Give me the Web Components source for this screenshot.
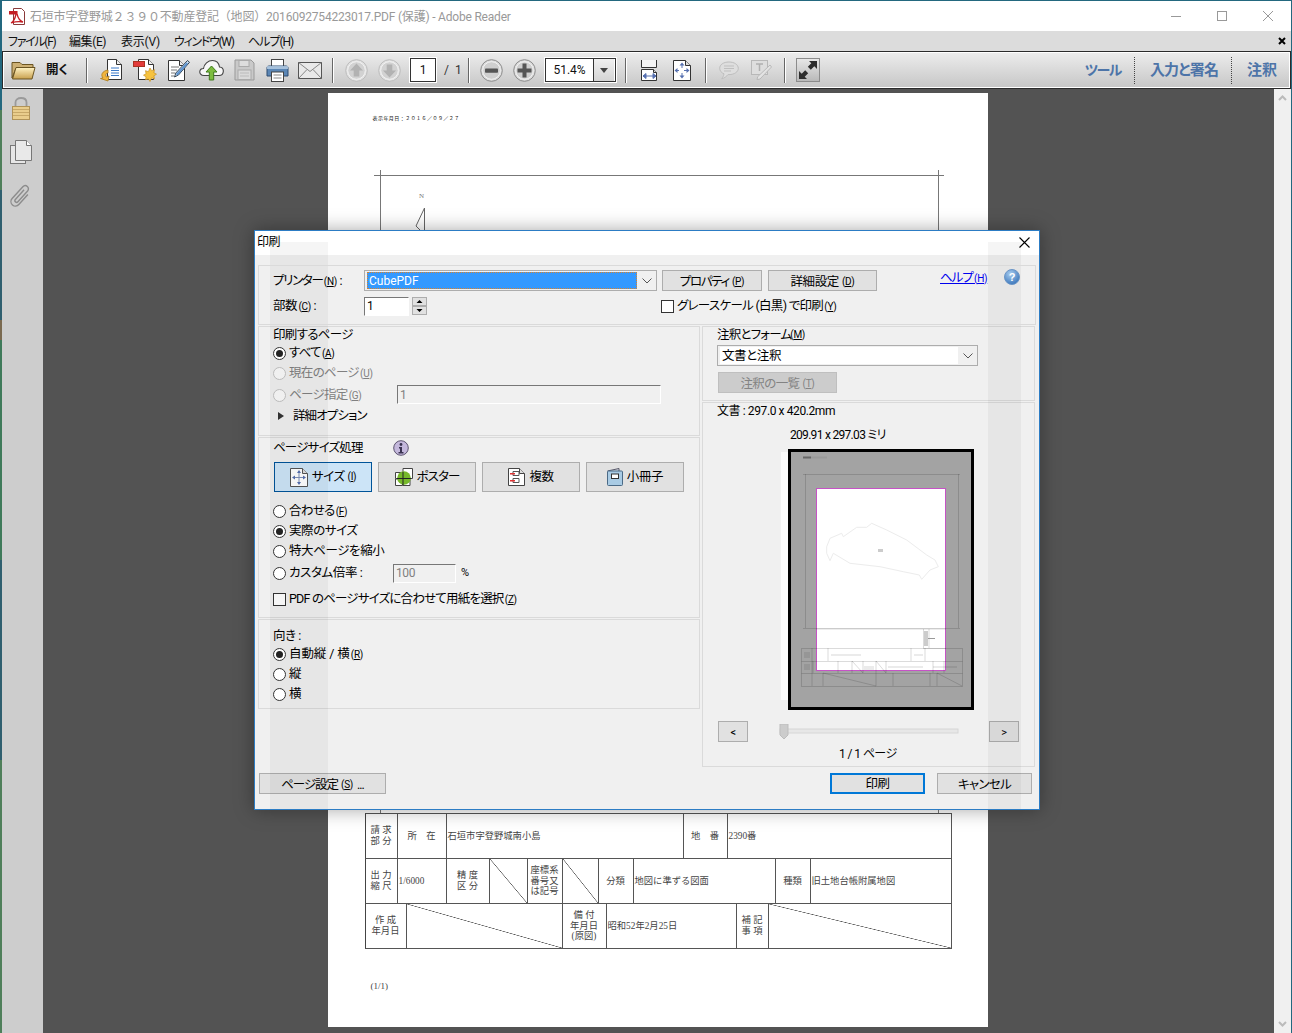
<!DOCTYPE html>
<html lang="ja">
<head>
<meta charset="utf-8">
<title>Adobe Reader</title>
<style>
html, body { margin: 0; height: 100%; overflow: hidden; }
body {
  font-family: Roboto, "Noto Sans CJK JP", sans-serif;
  font-feature-settings: "palt";
  background: linear-gradient(#23687f 0 110px, #4f7f5a 110px 190px, #2f5f6f 190px 320px, #7a6a50 320px 340px, #3f7a5a 340px 560px, #2f5f6f 560px 760px, #4f7f5a 760px) 0 0 / 2px 100% no-repeat, #23687f;
}
pdf-workspace { height: 944px; }
</style>
</head>
<body>
<pdf-window>
  <pdf-titlebar>石垣市字登野城２３９０不動産登記（地図）2016092754223017.PDF (保護) - Adobe Reader</pdf-titlebar>
  <pdf-menubar></pdf-menubar>
  <pdf-toolbar></pdf-toolbar>
  <pdf-workspace>
    <pdf-rail></pdf-rail>
    <pdf-doc>
      <pdf-page>
        <map-row style="height:46px">
          <map-cell style="width:32px" center>請 求<br>部 分</map-cell>
          <map-cell style="width:49px" center>所　在</map-cell>
          <map-cell style="width:237px">石垣市字登野城南小島</map-cell>
          <map-cell style="width:44px" center>地　番</map-cell>
          <map-cell style="width:224px" last>2390番</map-cell>
        </map-row>
        <map-row style="height:45px">
          <map-cell style="width:32px" center>出 力<br>縮 尺</map-cell>
          <map-cell style="width:49px">1/6000</map-cell>
          <map-cell style="width:43px" center>精 度<br>区 分</map-cell>
          <map-cell style="width:38px" diag></map-cell>
          <map-cell style="width:35px" center>座標系<br>番号又<br>は記号</map-cell>
          <map-cell style="width:36px" diag></map-cell>
          <map-cell style="width:35px" center>分類</map-cell>
          <map-cell style="width:142px">地図に準ずる図面</map-cell>
          <map-cell style="width:35px" center>種類</map-cell>
          <map-cell style="width:141px" last>旧土地台帳附属地図</map-cell>
        </map-row>
        <map-row style="height:45px">
          <map-cell style="width:41px" center>作 成<br>年月日</map-cell>
          <map-cell style="width:156px" diag></map-cell>
          <map-cell style="width:44px" center>備 付<br>年月日<br>(原図)</map-cell>
          <map-cell style="width:130px">昭和52年2月25日</map-cell>
          <map-cell style="width:32px" center>補 記<br>事 項</map-cell>
          <map-cell style="width:183px" diag last></map-cell>
        </map-row>
      </pdf-page>
    </pdf-doc>
    <pdf-scrollbar></pdf-scrollbar>
  </pdf-workspace>
  <print-dialog></print-dialog>
</pdf-window>

<script>
// icons are all drawn by hand, sized to their box
const ICONS = {
  pdf: `<svg viewBox="0 0 17 17" width="17" height="17"><path d="M4.500.5h8l3 3v13h-11z" fill="#fff" stroke="#8a3a3a"/><path d="M0 3h8.500v3.500H0z" fill="#c41e24"/><path d="M7 6c-1 5-3 8-5 9 3-1 8-2 12-1-3-1-5-4-6-8" fill="none" stroke="#c41e24" stroke-width="1.300"/></svg>`,
  folder: `<svg viewBox="0 0 25 20" width="25" height="20"><defs><linearGradient id="f" x1="0" y1="0" x2="0" y2="1"><stop offset="0" stop-color="#fff3c4"/><stop offset="1" stop-color="#c8a04e"/></linearGradient></defs><path d="M1 18V2.500h8l2 2h11V8H5z" fill="#cdb074" stroke="#6b5522"/><path d="M1.500 19 5 7.500h19L21 19z" fill="url(#f)" stroke="#6b5522"/></svg>`,
  create: `<svg viewBox="0 0 23 24" width="23" height="24"><path d="M7.500 1.500h9l5 5v15h-14z" fill="#fff" stroke="#333"/><path d="M16.500 1.500v5h5" fill="#eee" stroke="#333"/><path d="M11 10h8M11 12.500h8M11 15h8M11 17.500h8" stroke="#3d7bc8" stroke-width="1.200"/><path d="M8 12C2 13 .5 17 3 20l-2.500.5L8 23l1-5-2.500 1C5 17 6 15 8 15z" fill="#f2b53c" stroke="#a87a1c" stroke-width=".8"/></svg>`,
  stamp: `<svg viewBox="0 0 24 24" width="24" height="24"><path d="M5.500 1.500h10l5 5v15h-15z" fill="#fff" stroke="#333"/><path d="M15.500 1.500v5h5" fill="#eee" stroke="#333"/><rect x=".5" y="3.500" width="11" height="5" fill="#e23b3b" stroke="#a32"/><path d="M17 10l1.600 2.700 2.900-1-.6 3 2.600 1.500-2.600 1.600.6 3-2.900-.9L17 23.500l-1.600-2.600-2.900.9.6-3-2.600-1.600 2.600-1.500-.6-3 2.900 1z" fill="#f6c23e" stroke="#c79224" stroke-width=".7"/></svg>`,
  edit: `<svg viewBox="0 0 22 24" width="22" height="24"><path d="M.5 2.500h11l5 5v15H.5z" fill="#fff" stroke="#333"/><path d="M11.500 2.500v5h5" fill="#eee" stroke="#333"/><path d="M3 9h8M3 12h6M3 15h4M3 18h3" stroke="#777"/><path d="M19.500 2.500l2 1.800L10.500 17l-4 2 1.300-4z" fill="#c8dcf0" stroke="#345"/><path d="M18.500 4.500l1.500 1.300L9.500 17.500 8 16z" fill="#5d93cf"/></svg>`,
  cloud: `<svg viewBox="0 0 25 22" width="25" height="22"><path d="M5 16.500C1.800 16.500.6 14 .8 12.500 1 10.500 3 9.500 4.500 9.500 5 5 9 1.500 13.500 1.500c4 0 6.500 3 7 6.500 2.500.3 4 2.300 3.800 4.500-.2 2.300-2 4-4.300 4z" fill="#f7f7f7" stroke="#444" stroke-width="1.100"/><path d="M12.500 7 18 13h-3.300v8h-4.400v-8H7z" fill="#7dbc3f" stroke="#3f7a1d"/></svg>`,
  save: `<svg viewBox="0 0 21 22" width="21" height="22"><path d="M1 1h16l3 3v17H1z" fill="#c9c9c9" stroke="#999"/><rect x="5" y="1.500" width="10" height="6" fill="#ddd" stroke="#aaa"/><rect x="4" y="11" width="13" height="9.500" fill="#d9d9d9" stroke="#aaa"/><path d="M6 14h9M6 17h9" stroke="#bbb"/></svg>`,
  print: `<svg viewBox="0 0 23 23" width="23" height="23"><rect x="5.500" y=".5" width="12" height="7" fill="#fff" stroke="#444"/><path d="M1 8.500Q1 7 3 7h17q2 0 2 1.500V17H1z" fill="#5b86b5" stroke="#2e4d70"/><rect x="1" y="7" width="21" height="3" fill="#b9cfe6" opacity=".8"/><rect x="5.500" y="13" width="12" height="9.500" fill="#fff" stroke="#444"/><path d="M7.500 16h8M7.500 19h8" stroke="#888"/></svg>`,
  mail: `<svg viewBox="0 0 24 17" width="24" height="17"><rect x=".5" y=".5" width="23" height="16" fill="#e9e9e9" stroke="#555"/><path d="M.5 .5 12 9.500 23.500 .5M.5 16.500l8.500-9M23.500 16.500l-8.500-9" fill="none" stroke="#888"/></svg>`,
  up: `<svg viewBox="0 0 23 23" width="23" height="23"><circle cx="11.500" cy="11.500" r="10.800" fill="#e3e3e3" stroke="#bcbcbc"/><circle cx="11.500" cy="11.500" r="8.800" fill="#d2d2d2" stroke="#f2f2f2"/><path d="M11.500 4.500 18 11.500h-3.700v6h-5.600v-6H5z" fill="#b2b2b2"/></svg>`,
  down: `<svg viewBox="0 0 23 23" width="23" height="23"><circle cx="11.500" cy="11.500" r="10.800" fill="#e3e3e3" stroke="#bcbcbc"/><circle cx="11.500" cy="11.500" r="8.800" fill="#d2d2d2" stroke="#f2f2f2"/><path d="M11.500 18.500 18 11.500h-3.700v-6h-5.600v6H5z" fill="#b2b2b2"/></svg>`,
  minus: `<svg viewBox="0 0 23 23" width="23" height="23"><circle cx="11.500" cy="11.500" r="10.800" fill="#dcdcdc" stroke="#8c8c8c"/><circle cx="11.500" cy="11.500" r="8.800" fill="#cfcfcf" stroke="#f2f2f2"/><rect x="5" y="9.500" width="13" height="4.200" rx=".8" fill="#555"/></svg>`,
  plus: `<svg viewBox="0 0 23 23" width="23" height="23"><circle cx="11.500" cy="11.500" r="10.800" fill="#dcdcdc" stroke="#8c8c8c"/><circle cx="11.500" cy="11.500" r="8.800" fill="#cfcfcf" stroke="#f2f2f2"/><path d="M9.500 4.500h4v5h5v4h-5v5h-4v-5h-5v-4h5z" fill="#555"/></svg>`,
  fitw: `<svg viewBox="0 0 17 21" width="17" height="21"><path d="M.5 0v7.500h15V0" fill="#f4f4f4" stroke="#333"/><path d="M.5 9.500h12l3 3v8H.5z" fill="#fff" stroke="#333"/><path d="M12.500 9.500v3h3" fill="#ddd" stroke="#333"/><path d="M2 16h13M2 16l3-2.500v5zM15 16l-3-2.500v5z" fill="#5670b0" stroke="#5670b0"/></svg>`,
  fitp: `<svg viewBox="0 0 18 21" width="18" height="21"><path d="M.5.5h12l5 5v15H.5z" fill="#fff" stroke="#333"/><path d="M12.500.5v5h5" fill="#ddd" stroke="#333"/><path d="M9 4v13M2 10.500h14" stroke="#5670b0" stroke-dasharray="4 5"/><path d="M9 2.500l2.500 3h-5zM9 18.500l2.500-3h-5zM1.500 10.500l3-2.500v5zM16.500 10.500l-3-2.500v5z" fill="#5670b0"/></svg>`,
  comment: `<svg viewBox="0 0 20 19" width="20" height="19"><path d="M10 1C4.500 1 .7 3.700.7 7.300c0 2.500 1.700 4.500 4.300 5.500-.3 2-1.300 4-2.300 5 2.500-.5 5-2.500 6.300-4.200H10c5.300 0 9.300-2.700 9.300-6.300S15.300 1 10 1z" fill="#dedede" stroke="#bebebe"/><path d="M5 5h10M5 7.500h10M5 10h7" stroke="#bfbfbf"/></svg>`,
  textc: `<svg viewBox="0 0 21 20" width="21" height="20"><rect x=".5" y=".5" width="16" height="14" fill="#dedede" stroke="#b8b8b8"/><path d="M5 4h7M8.500 4v7" stroke="#b0b0b0" stroke-width="1.500"/><path d="M19 5l1.500 2L9 19l-3 .7.700-3z" fill="#e3e3e3" stroke="#b8b8b8"/></svg>`,
  full: `<svg viewBox="0 0 24 24" width="24" height="24"><defs><linearGradient id="g" x1="0" y1="0" x2="0" y2="1"><stop offset="0" stop-color="#e8e8e8"/><stop offset="1" stop-color="#b8b8b8"/></linearGradient></defs><rect x=".5" y=".5" width="23" height="23" fill="url(#g)" stroke="#8c8c8c"/><path d="M21 3v8l-2.700-2.700-3.500 3.500-3-3 3.500-3.500L13 3zM3 21v-8l2.700 2.700 3.500-3.500 3 3-3.500 3.500L11 21z" fill="#2d2d2d"/></svg>`,
  lock: `<svg viewBox="0 0 18 23" width="18" height="23"><path d="M3.500 10V5.500C3.500 2.500 6 1 9 1s5.500 1.500 5.500 4.500V10" fill="none" stroke="#9a9a9a" stroke-width="1.800"/><rect x=".5" y="9.500" width="17" height="13" fill="#e9cd8c" stroke="#b09358"/><path d="M1 12.500h16M1 15.500h16M1 18.500h16" stroke="#c7a868"/></svg>`,
  pages: `<svg viewBox="0 0 22 24" width="22" height="24"><rect x=".5" y="5.500" width="15" height="18" fill="#e6e6e6" stroke="#777"/><path d="M5.500.5h11l5 5v15h-16z" fill="#e9e9e9" stroke="#777"/><path d="M16.500.5v5h5" fill="#fff" stroke="#777"/></svg>`,
  clip: `<svg viewBox="0 0 23 24" width="23" height="24"><g transform="rotate(42 11.500 12) translate(-.5 -1)"><path d="M10.500 6v13a1.700 1.700 0 0 0 3.400 0V4.500a3.200 3.200 0 0 0-6.400 0v16a4.500 4.500 0 0 0 9 0V7" fill="none" stroke="#8c8c8c" stroke-width="1.400"/></g></svg>`,
  help: `<svg viewBox="0 0 16 16" width="16" height="16"><defs><radialGradient id="h" cx=".4" cy=".3" r=".8"><stop offset="0" stop-color="#a9cdf0"/><stop offset="1" stop-color="#2f6db5"/></radialGradient></defs><circle cx="8" cy="8" r="7.500" fill="url(#h)" stroke="#6b95c6"/><text x="8" y="12" font-size="11" font-weight="700" font-family="Liberation Sans" text-anchor="middle" fill="#fff">?</text></svg>`,
  info: `<svg viewBox="0 0 16 16" width="16" height="16"><circle cx="8" cy="8" r="7.300" fill="#c4b8dc" stroke="#5c5470"/><circle cx="8" cy="4.500" r="1.400" fill="#3a3350"/><path d="M6 7h3v5h1.500v1.500h-5V12H7V8.500H6z" fill="#3a3350"/></svg>`,
  size: `<svg viewBox="0 0 18 19" width="18" height="19"><path d="M.5.5h12l5 5v13H.5z" fill="#fff" stroke="#555"/><path d="M12.500.5v5h5" fill="#ddd" stroke="#555"/><path d="M9 3.500v12M3 9.500h12" stroke="#7d8fb8"/><path d="M9 2l2 3H7zM9 17l2-3H7zM2 9.500l3-2v4zM16 9.500l-3-2v4z" fill="#5670b0"/></svg>`,
  poster: `<svg viewBox="0 0 18 18" width="18" height="18"><path d="M.5 4.500h7v6h-7zM.5 11h7v6.500h-7zM8 .5h9.500v10H8zM8 11h7v6.500H8z" fill="#fff" stroke="#444"/><circle cx="9" cy="10" r="6.800" fill="#76b82a"/><path d="M8 4v13M2 10.500h14" stroke="#222"/></svg>`,
  multi: `<svg viewBox="0 0 17 18" width="17" height="18"><path d="M.5.5h11l5 5v12H.5z" fill="#fff" stroke="#444"/><path d="M11.500.5v5h5" fill="#ddd" stroke="#444"/><path d="M5 3.500h6v4H5zM5 10.500h6v4H5z" fill="#fff" stroke="#555"/><path d="M2 5h5v1.500H2zM2 12h5v1.500H2z" fill="#d33"/></svg>`,
  book: `<svg viewBox="0 0 16 18" width="16" height="18"><path d="M.5 3 12 .5V3" fill="#d4dbe3" stroke="#556"/><rect x=".5" y="3" width="15" height="14.500" rx="1" fill="#a9cbe4" stroke="#4b6a86"/><rect x="4.500" y="6" width="7" height="4.500" fill="#fff" stroke="#333"/></svg>`
};

class PdfIcon extends HTMLElement {
  connectedCallback() {
    const root = this.attachShadow({ mode: 'open' });
    root.innerHTML = `<style>:host{display:block;flex:none;line-height:0}svg{display:block}</style>` + ICONS[this.getAttribute('name')];
  }
}

class PdfWindow extends HTMLElement {
  constructor() {
    super();
    this.attachShadow({ mode: 'open' }).innerHTML = `
      <style>
        :host { display: block; position: relative; margin: 1px 1px 0 2px; height: 1032px; }
      </style>
      <slot></slot>`;
  }
}

class PdfTitlebar extends HTMLElement {
  constructor() {
    super();
    this.attachShadow({ mode: 'open' }).innerHTML = `
      <style>
        :host { display: flex; align-items: center; height: 30px; background: #fff; color: #999; font-size: 12px; padding-left: 7px; }
        .t { margin-left: 4px; padding-bottom: 2px; white-space: nowrap; letter-spacing: -.2px; font-feature-settings: normal; flex: 1; }
        .ctl { display: flex; }
        .ctl div { width: 46px; height: 30px; display: flex; align-items: center; justify-content: center; }
      </style>
      <pdf-icon name="pdf"></pdf-icon>
      <div class="t"><slot></slot></div>
      <div class="ctl">
        <div><svg width="10" height="10"><path d="M0 5.500h10" stroke="#999"/></svg></div>
        <div><svg width="10" height="10"><rect x=".5" y=".5" width="9" height="9" fill="none" stroke="#999"/></svg></div>
        <div><svg width="10" height="10"><path d="M0 0l10 10M10 0L0 10" stroke="#999"/></svg></div>
      </div>`;
  }
}

class PdfMenubar extends HTMLElement {
  constructor() {
    super();
    this.attachShadow({ mode: 'open' }).innerHTML = `
      <style>
        :host { display: flex; align-items: center; height: 20px; background: #dcdcdc; font-size: 12px; color: #111; padding-left: 6px; }
        span { white-space: nowrap; padding-bottom: 2px; }
        svg { margin-left: auto; margin-right: 5px; }
      </style>
      <span style="width:61px;letter-spacing:-1.300px">ファイル(F)</span>
      <span style="width:52px;letter-spacing:-.4px">編集(E)</span>
      <span style="width:53px;letter-spacing:-.2px">表示(V)</span>
      <span style="width:74px;letter-spacing:-1.300px">ウィンドウ(W)</span>
      <span style="letter-spacing:-1px">ヘルプ(H)</span>
      <svg width="8" height="8"><path d="M1 1l6 6M7 1L1 7" stroke="#000" stroke-width="2"/></svg>`;
  }
}

class PdfToolbar extends HTMLElement {
  constructor() {
    super();
    // margins are the gaps between buttons, worked out from the left edge
    const item = (name, ml) => `<pdf-icon name="${name}" style="margin-left:${ml}px"></pdf-icon>`;
    this.attachShadow({ mode: 'open' }).innerHTML = `
      <style>
        :host { display: flex; align-items: center; height: 34px; margin-top: 0; border: 1px solid #2b2b2b; box-shadow: inset 0 0 0 1px #fff; padding: 1px 0 1px 8px;
          background: linear-gradient(#ededed, #c6c6c6); font-size: 12px; color: #111; }
        .sep { width: 2px; height: 25px; flex: none; background: #fff; border-left: 1px solid #666; box-sizing: border-box; }
        .open { font-size: 12.500px; font-weight: 700; margin-left: 10px; width: 22px; white-space: nowrap; padding-bottom: 3px; }
        .num { flex: none; background: #fff; border: 1px solid #333; box-shadow: 0 0 0 1px #fff; height: 22px; line-height: 22px; box-sizing: content-box; }
        .right { margin-left: auto; display: flex; align-items: center; color: #4d74a8; font-weight: 700; font-size: 15px; padding-right: 13px; }
        .right span { padding-bottom: 3px; }
        .dot { width: 0; height: 27px; border-left: 1px dotted #444; margin: 0 15px 0 13px; }
        .zoomarrow { width: 21px; height: 22px; border-left: 1px solid #333; background: linear-gradient(#f0f0f0,#d4d4d4); display: flex; align-items: center; justify-content: center; box-sizing: border-box; }
      </style>
      ${item('folder', 0)}
      <span class="open">開く</span>
      <div class="sep" style="margin-left:18px"></div>
      ${item('create', 12)}${item('stamp', 10)}${item('edit', 11)}${item('cloud', 9)}${item('save', 10)}${item('print', 11)}${item('mail', 9)}
      <div class="sep" style="margin-left:10px"></div>
      ${item('up', 11)}${item('down', 10)}
      <div class="num" style="margin-left:9px;width:24px;text-align:center">1</div>
      <span style="margin-left:8px;width:24px;white-space:pre;color:#333">/  1</span>
      <div class="sep"></div>
      ${item('minus', 10)}${item('plus', 10)}
      <div class="num" style="margin-left:9px;width:69px;display:flex">
        <span style="width:47px;text-align:center;color:#111">51.4%</span>
        <span class="zoomarrow"><svg width="8" height="5"><path d="M0 0h8L4 5z" fill="#444"/></svg></span>
      </div>
      <div class="sep" style="margin-left:9px"></div>
      ${item('fitw', 14)}${item('fitp', 15)}
      <div class="sep" style="margin-left:14px"></div>
      ${item('comment', 12)}${item('textc', 12)}
      <div class="sep" style="margin-left:12px"></div>
      ${item('full', 10)}
      <div class="right">
        <span style="font-size:14px;letter-spacing:-1.500px">ツール</span><div class="dot"></div><span style="letter-spacing:-.9px">入力と署名</span><div class="dot"></div><span>注釈</span>
      </div>`;
  }
}

class PdfWorkspace extends HTMLElement {
  constructor() {
    super();
    this.attachShadow({ mode: 'open' }).innerHTML = `
      <style>:host { display: flex; background: #535353; }</style><slot></slot>`;
  }
}

class PdfRail extends HTMLElement {
  constructor() {
    super();
    this.attachShadow({ mode: 'open' }).innerHTML = `
      <style>
        :host { flex: none; width: 41px; background: #cdcdcd; display: flex; flex-direction: column; align-items: center; padding: 8px 4px 0 0; box-sizing: border-box; gap: 20px; }
      </style>
      <pdf-icon name="lock"></pdf-icon>
      <pdf-icon name="pages"></pdf-icon>
      <pdf-icon name="clip"></pdf-icon>`;
  }
}

class PdfDoc extends HTMLElement {
  constructor() {
    super();
    this.attachShadow({ mode: 'open' }).innerHTML = `
      <style>:host { flex: 1; display: flex; justify-content: center; padding: 4px 2px 0 0; box-sizing: border-box; }</style><slot></slot>`;
  }
}

class PdfPage extends HTMLElement {
  constructor() {
    super();
    this.attachShadow({ mode: 'open' }).innerHTML = `
      <style>
        :host { display: block; width: 660px; height: 934px; background: #fff; box-sizing: border-box; padding: 22px 0 0 37px; color: #222; }
        .date { font-size: 5px; line-height: 7px; letter-spacing: .45px; margin-left: 8px; height: 7px; white-space: nowrap; color: #111; font-feature-settings: normal; }
        svg { display: block; margin-top: 48px; margin-left: 0; }
        .foot { font: 9px "Liberation Serif", serif; margin: 32px 0 0 6px; color: #444; }
      </style>
      <div class="date">表示年月日：２０１６／０９／２７</div>
      <svg width="590" height="643" viewBox="365 170 590 643">
        <path d="M374 175.500H944M380.500 170V813M938.500 170V813" stroke="#777" fill="none"/>
        <text x="419" y="198" font-size="7" fill="#777" font-family="Liberation Serif">N</text>
        <path d="M424.500 208V232M424.500 208 416 226l4 4" stroke="#666" fill="none"/>
      </svg>
      <slot></slot>
      <div class="foot">(1/1)</div>`;
  }
}

class MapRow extends HTMLElement {
  constructor() {
    super();
    this.attachShadow({ mode: 'open' }).innerHTML = `
      <style>
        :host { display: flex; width: 587px; box-sizing: border-box; border-left: 1px solid #444; border-bottom: 1px solid #555; }
        :host(:first-child) { border-top: 1px solid #555; }
      </style><slot></slot>`;
  }
}

class MapCell extends HTMLElement {
  constructor() {
    super();
    this.attachShadow({ mode: 'open' }).innerHTML = `
      <style>
        :host { display: flex; flex: none; align-items: center; box-sizing: border-box; border-right: 1px solid #555; padding-left: 1px;
          font-family: "Liberation Serif", "Noto Sans CJK JP", serif; font-size: 9.300px; line-height: 10.800px; color: #444; white-space: nowrap; font-feature-settings: normal; }
        :host([center]) { justify-content: center; text-align: center; padding-left: 0; }
        :host([diag]) { background: linear-gradient(to top right, transparent calc(50% - .6px), #555 50%, transparent calc(50% + .6px)); }
        :host([last]) { flex: 1; }
      </style><div><slot></slot></div>`;
  }
}

class PdfScrollbar extends HTMLElement {
  constructor() {
    super();
    this.attachShadow({ mode: 'open' }).innerHTML = `
      <style>
        :host { flex: none; width: 17px; background: #f0f0f0; display: flex; flex-direction: column; justify-content: space-between; align-items: center; padding: 6px 0; box-sizing: border-box; }
      </style>
      <svg width="9" height="6"><path d="M1 5l3.500-3.500L8 5" fill="none" stroke="#bbb" stroke-width="2"/></svg>
      <svg width="9" height="6"><path d="M1 1l3.500 3.500L8 1" fill="none" stroke="#bbb" stroke-width="2"/></svg>`;
  }
}

// underlined access key, printed smaller than the label like in the real dialog
class AccKey extends HTMLElement {
  constructor() {
    super();
    this.attachShadow({ mode: 'open' }).innerHTML = `
      <style>:host { font-size: 10px; letter-spacing: -.3px; margin-left: -1px; } </style>(<u><slot></slot></u>)`;
  }
}

class DlgPanel extends HTMLElement {
  constructor() {
    super();
    this.attachShadow({ mode: 'open' }).innerHTML = `
      <style>
        :host { display: block; box-sizing: border-box; border: 1px solid #dadada; padding-left: 14px; }
      </style><slot></slot>`;
  }
}

class DlgRow extends HTMLElement {
  constructor() {
    super();
    this.attachShadow({ mode: 'open' }).innerHTML = `
      <style>
        :host { display: flex; align-items: center; height: 20px; white-space: nowrap; }
      </style><slot></slot>`;
  }
}

class DlgRadio extends HTMLElement {
  constructor() {
    super();
    this.attachShadow({ mode: 'open' }).innerHTML = `
      <style>
        :host { display: flex; align-items: center; height: 20px; gap: 3px; white-space: nowrap; }
        :host([off]) { color: #808080; }
        .c { width: 13px; height: 13px; box-sizing: border-box; border: 1px solid #333; border-radius: 50%; background: #fff; position: relative; flex: none; }
        :host([off]) .c { border-color: #bbb; background: #f0f0f0; }
        :host([on]) .c::after { content: ""; position: absolute; inset: 2px; border-radius: 50%; background: #222; }
      </style>
      <div class="c"></div><span><slot></slot></span>`;
  }
}

class DlgCheck extends HTMLElement {
  constructor() {
    super();
    this.attachShadow({ mode: 'open' }).innerHTML = `
      <style>
        :host { display: flex; align-items: center; height: 20px; gap: 3px; white-space: nowrap; }
        .b { width: 13px; height: 13px; box-sizing: border-box; border: 1px solid #333; background: #fff; flex: none; }
      </style>
      <div class="b"></div><span><slot></slot></span>`;
  }
}

class DlgButton extends HTMLElement {
  constructor() {
    super();
    this.attachShadow({ mode: 'open' }).innerHTML = `
      <style>
        :host { display: flex; flex: none; align-items: center; justify-content: center; gap: 4px; height: 21px; box-sizing: border-box; background: #e1e1e1; border: 1px solid #adadad; white-space: nowrap; padding-top: 2px; }
        :host([primary]) { border: 2px solid #0078d7; padding-top: 1px; }
        :host([off]) { background: #ccc; border-color: #bfbfbf; color: #838383; }
        :host([current]) { background: #cce4f7; border-color: #005499; }
        :host([tab]) { height: 30px; width: 98px; padding-top: 0; }
      </style><slot></slot>`;
  }
}

class DlgSelect extends HTMLElement {
  constructor() {
    super();
    this.attachShadow({ mode: 'open' }).innerHTML = `
      <style>
        :host { display: flex; flex: none; height: 21px; box-sizing: border-box; border: 1px solid #adadad; background: #f0f0f0; align-items: stretch; padding: 1px 0 1px 2px; }
        .v { flex: 1; display: flex; align-items: center; padding-left: 2px; background: #fff; }
        :host([focus]) .v { background: #3399ff; color: #fff; outline: 1px dotted #d9822b; outline-offset: -1px; padding-top: 1px; }
        .a { width: 19px; display: flex; align-items: center; justify-content: center; flex: none; }
      </style>
      <div class="v"><slot></slot></div>
      <div class="a"><svg width="10" height="6"><path d="M.5.500 5 5 9.500.5" fill="none" stroke="#555"/></svg></div>`;
  }
}

class DlgField extends HTMLElement {
  constructor() {
    super();
    this.attachShadow({ mode: 'open' }).innerHTML = `
      <style>
        :host { display: flex; flex: none; align-items: center; box-sizing: border-box; border: 1px solid; border-color: #777 #fff #fff #777; padding-left: 2px; height: 19px; font-size: 12px; color: #808080; background: #f0f0f0; }
        :host([live]) { background: #fff; color: #000; }
      </style><slot></slot>`;
  }
}

class PrintPreview extends HTMLElement {
  constructor() {
    super();
    this.attachShadow({ mode: 'open' }).innerHTML = `
      <style>:host { display: block; width: 186px; height: 261px; margin-left: 71px; } svg { display: block; }</style>
      <svg width="186" height="261" viewBox="0 0 186 261">
        <rect x="1.500" y="1.500" width="183" height="258" fill="#a3a3a3" stroke="#000" stroke-width="3"/>
        <rect x="28.500" y="39.500" width="129" height="182" fill="#fff" stroke="#c653c6"/>
        <rect x="15" y="7.500" width="8" height="2" fill="#666"/><rect x="23" y="7.500" width="16" height="2" fill="#999"/>
        <g fill="none" stroke="#000" stroke-opacity=".14">
          <path d="M17.500 25V179M170.500 25V179M15 25.500H172M15 179.500H172"/>
          <path d="M13.500 199.500H174.500V237.500H13.500zM13.500 212.500H174.500M13.500 224.500H174.500"/>
          <path d="M24 199V237M40 199V212M123 199V212M137 199V212M25 212V224M50 212V224M64 212V224M75 212V224M88 212V224M98 212V224M145 212V224M156 212V224M35 224V237M88 224V237M105 224V237M142 224V237M149 224V237"/>
          <path d="M64 212L75 224M88 212L98 224M35 224L88 237M149 224L174 237"/>
          <path d="M135.500 180V199M141 180V199M135 199.500H158M28 180H158"/>
        </g>
        <path d="M38.700 97.700 42 89.300 53.700 84.300 55.300 87.700 68.700 78.300 78.700 78.300 83.700 74.300 98.700 81 118.700 91 138.700 106 147 111 150.300 117.700 142 121 133.700 130.300 131.300 126 115.300 122.700 92 117.700 62 114.300 45.300 104.300 42 111.700 38.700 104.300z" fill="none" stroke="#ececec"/>
        <rect x="90" y="100" width="5" height="3" fill="#ccc"/>
        <rect x="138" y="189" width="9" height="1" fill="#999"/>
        <path d="M136 182h4v15h-4z" fill="#ccc"/>
        <path d="M16 203h6v6h-6zM16 215h6v6h-6zM43 205h30v2H43zM126 205h9v2h-9zM100 217h35v2h-35zM145 217h24v2h-24zM76 217h10v4H76z" fill="#000" fill-opacity=".08"/>
      </svg>`;
  }
}

class PrintDialog extends HTMLElement {
  constructor() {
    super();
    this.attachShadow({ mode: 'open' }).innerHTML = `
      <style>
        :host { display: block; position: absolute; left: 252px; top: 229px; width: 786px; height: 580px; box-sizing: border-box;
          border: 1px solid #2c7cc4; background: #f0f0f0; box-shadow: 0 0 18px rgba(0,0,0,.35); color: #000; font-size: 12.500px; line-height: 16px; letter-spacing: -.4px; }
        .ghost { position: absolute; top: 11px; bottom: 0; background: rgba(0,0,0,.04); pointer-events: none; }
        .title { height: 22px; padding: 0 9px 2px 2px; background: #fff; display: flex; align-items: center; justify-content: space-between; font-size: 12px; }
        .body { padding: 10px 3px 0 3px; }
        .top { height: 60px; position: relative; padding-top: 4px; }
        .cols { display: flex; gap: 2px; margin-top: 1px; }
        .left { width: 442px; }
        .right { width: 333px; }
        .bottom { display: flex; margin-top: 6px; padding-left: 1px; }
        .lab { width: 91px; flex: none; padding-top: 1px; }
        .tabs { display: flex; gap: 6px; margin: 5px 0 9px 1px; }
        a { color: #0000ee; }
      </style>
      <div class="ghost" style="left:15px;width:58px"></div>
      <div class="ghost" style="left:733px;width:33px"></div>
      <div class="ghost" style="left:526px;width:7px;top:221px;bottom:109px;background:rgba(255,255,255,.75)"></div>
      <div class="title"><span>印刷</span><svg width="11" height="11"><path d="M.5.5l10 10M10.500.5l-10 10" stroke="#000" stroke-width="1.100"/></svg></div>
      <div class="body">
        <dlg-panel class="top">
          <dlg-row style="height:21px">
            <span class="lab"><span style="letter-spacing:-1.300px">プリンター</span><acc-key>N</acc-key> :</span>
            <dlg-select focus style="width:293px;font-size:12px;letter-spacing:0">CubePDF</dlg-select>
            <dlg-button style="width:100px;margin-left:5px;letter-spacing:-1.300px">プロパティ<acc-key>P</acc-key></dlg-button>
            <dlg-button style="width:109px;margin-left:6px">詳細設定<acc-key>D</acc-key></dlg-button>
            <a href="#" style="margin-left:63px;margin-top:-5px;letter-spacing:-1px">ヘルプ<acc-key>H</acc-key></a>
            <pdf-icon name="help" style="margin-left:17px;margin-top:-8px"></pdf-icon>
          </dlg-row>
          <dlg-row style="margin-top:5px">
            <span class="lab">部数<acc-key>C</acc-key> :</span>
            <dlg-field live style="width:45px">1</dlg-field>
            <svg width="15" height="18" style="margin-left:3px;flex:none"><rect x=".5" y=".5" width="14" height="8" fill="#e1e1e1" stroke="#adadad"/><rect x=".5" y="9.500" width="14" height="8" fill="#e1e1e1" stroke="#adadad"/><path d="M4.500 6l3-3 3 3zM4.500 12l3 3 3-3z" fill="#000"/></svg>
            <dlg-check style="margin-left:234px;letter-spacing:-.7px">グレースケール (白黒) で印刷<acc-key>Y</acc-key></dlg-check>
          </dlg-row>
        </dlg-panel>
        <div class="cols">
          <div class="left">
            <dlg-panel style="height:110px">
              <dlg-row style="height:16px;letter-spacing:-.7px">印刷するページ</dlg-row>
              <dlg-radio on style="letter-spacing:-.8px">すべて<acc-key>A</acc-key></dlg-radio>
              <dlg-radio off style="letter-spacing:-.7px">現在のページ<acc-key>U</acc-key></dlg-radio>
              <dlg-row style="margin-top:2px">
                <dlg-radio off style="width:124px;letter-spacing:-.7px">ページ指定<acc-key>G</acc-key></dlg-radio>
                <dlg-field style="width:264px;margin-bottom:1px">1</dlg-field>
              </dlg-row>
              <dlg-row style="padding:1px 0 0 5px;gap:9px;letter-spacing:-.9px"><svg width="6" height="8"><path d="M0 0l6 4-6 4z" fill="#333"/></svg>詳細オプション</dlg-row>
            </dlg-panel>
            <dlg-panel style="height:181px;margin-top:1px">
              <dlg-row style="height:19px"><span style="width:120px;letter-spacing:-.8px">ページサイズ処理</span><pdf-icon name="info"></pdf-icon></dlg-row>
              <div class="tabs">
                <dlg-button tab current><pdf-icon name="size"></pdf-icon>サイズ<acc-key>I</acc-key></dlg-button>
                <dlg-button tab style="letter-spacing:-.9px"><pdf-icon name="poster"></pdf-icon>ポスター</dlg-button>
                <dlg-button tab><pdf-icon name="multi"></pdf-icon>複数</dlg-button>
                <dlg-button tab><pdf-icon name="book"></pdf-icon>小冊子</dlg-button>
              </div>
              <dlg-radio style="letter-spacing:-.7px">合わせる<acc-key>F</acc-key></dlg-radio>
              <dlg-radio on>実際のサイズ</dlg-radio>
              <dlg-radio>特大ページを縮小</dlg-radio>
              <dlg-row style="margin-top:2px">
                <dlg-radio style="width:120px">カスタム倍率 :</dlg-radio>
                <dlg-field style="width:63px">100</dlg-field>
                <span style="margin-left:5px;font-size:11px">%</span>
              </dlg-row>
              <dlg-check style="margin-top:6px;letter-spacing:-.8px">PDF のページサイズに合わせて用紙を選択<acc-key>Z</acc-key></dlg-check>
            </dlg-panel>
            <dlg-panel style="height:90px;margin-top:1px;padding-top:7px">
              <dlg-row style="height:17px">向き :</dlg-row>
              <dlg-radio on style="letter-spacing:-.1px">自動縦 / 横<acc-key>R</acc-key></dlg-radio>
              <dlg-radio>縦</dlg-radio>
              <dlg-radio>横</dlg-radio>
            </dlg-panel>
          </div>
          <div class="right">
            <dlg-panel style="height:75px">
              <dlg-row style="height:16px;letter-spacing:-.8px">注釈とフォーム<acc-key>M</acc-key></dlg-row>
              <dlg-select style="width:261px;margin-top:2px">文書と注釈</dlg-select>
              <dlg-button off style="width:119px;margin:6px 0 0 1px;letter-spacing:-.6px">注釈の一覧<acc-key>T</acc-key></dlg-button>
            </dlg-panel>
            <dlg-panel style="height:365px;margin-top:1px">
              <dlg-row style="height:16px;font-size:12px">文書 : 297.0 x 420.2mm</dlg-row>
              <dlg-row style="height:16px;font-size:12px;margin:8px 0 6px 73px;letter-spacing:-.7px">209.91 x 297.03 ミリ</dlg-row>
              <print-preview></print-preview>
              <dlg-row style="height:21px;margin:11px 0 0 1px">
                <dlg-button style="width:30px;font-size:11px">&lt;</dlg-button>
                <svg width="180" height="16" style="margin-left:31px;flex:none"><rect x="1" y="5" width="178" height="4" fill="#e7e7e7" stroke="#d6d6d6"/><path d="M1 0h8v11l-4 4-4-4z" fill="#ccc" stroke="#bdbdbd"/></svg>
                <dlg-button style="width:30px;margin-left:30px;font-size:11px">&gt;</dlg-button>
              </dlg-row>
              <dlg-row style="height:16px;margin:4px 0 0 122px;font-size:12px;letter-spacing:-.6px">1 / 1 ページ</dlg-row>
            </dlg-panel>
          </div>
        </div>
        <div class="bottom">
          <dlg-button style="width:127px;letter-spacing:-1px">ページ設定<acc-key>S</acc-key>...</dlg-button>
          <dlg-button primary style="width:95px;margin-left:444px">印刷</dlg-button>
          <dlg-button style="width:95px;margin-left:12px;letter-spacing:-.7px">キャンセル</dlg-button>
        </div>
      </div>`;
  }
}

const elements = {
  'pdf-icon': PdfIcon, 'pdf-window': PdfWindow, 'pdf-titlebar': PdfTitlebar, 'pdf-menubar': PdfMenubar,
  'pdf-toolbar': PdfToolbar, 'pdf-workspace': PdfWorkspace, 'pdf-rail': PdfRail, 'pdf-doc': PdfDoc,
  'pdf-page': PdfPage, 'map-row': MapRow, 'map-cell': MapCell, 'pdf-scrollbar': PdfScrollbar,
  'acc-key': AccKey, 'dlg-panel': DlgPanel, 'dlg-row': DlgRow, 'dlg-radio': DlgRadio, 'dlg-check': DlgCheck,
  'dlg-button': DlgButton, 'dlg-select': DlgSelect, 'dlg-field': DlgField, 'print-preview': PrintPreview,
  'print-dialog': PrintDialog
};
for (const name in elements) customElements.define(name, elements[name]);
</script>
</body>
</html>
